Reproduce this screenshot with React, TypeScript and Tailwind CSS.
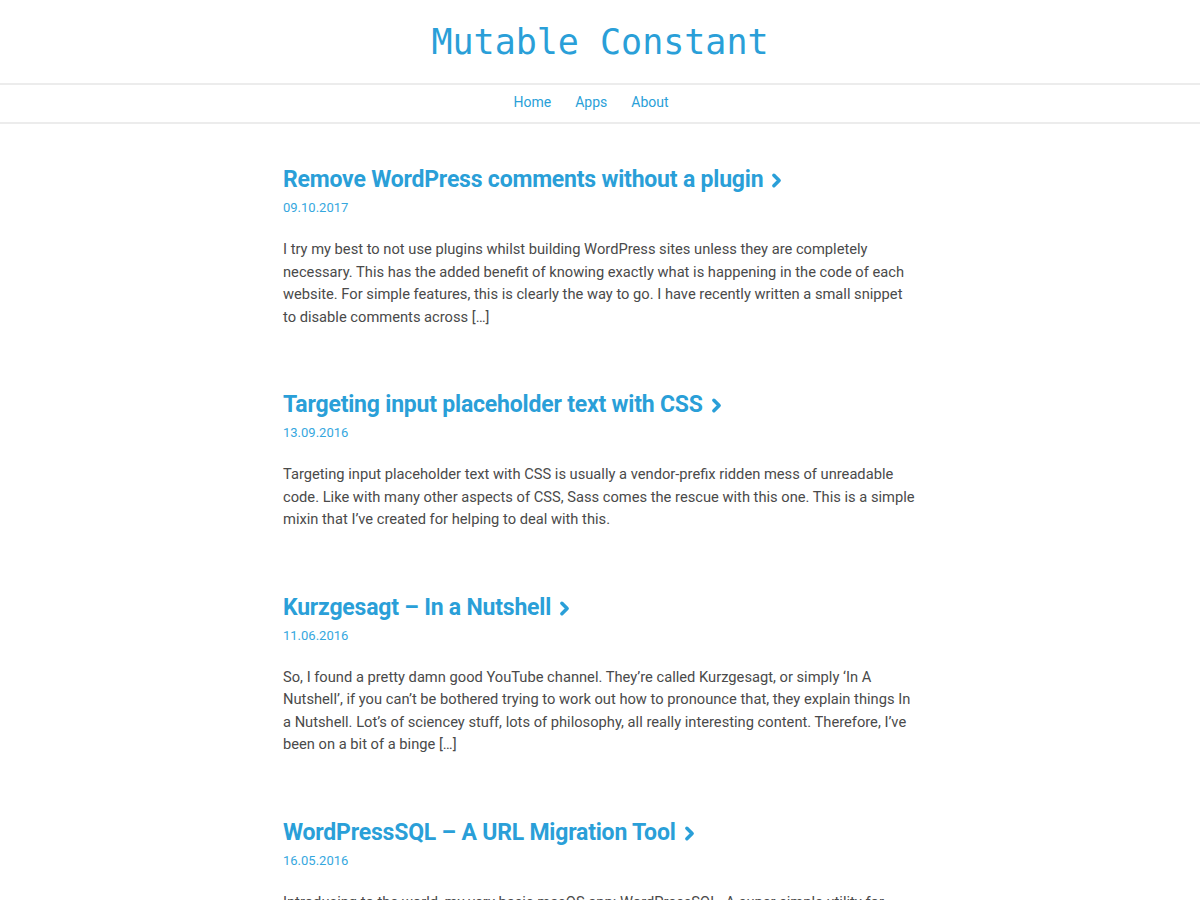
import React from 'react';
import { ChevronRight } from 'lucide-react';

const POSTS = [
  {
    title: 'Remove WordPress comments without a plugin',
    date: '09.10.2017',
    lines: [
      'I try my best to not use plugins whilst building WordPress sites unless they are completely',
      'necessary. This has the added benefit of knowing exactly what is happening in the code of each',
      'website. For simple features, this is clearly the way to go. I have recently written a small snippet',
      'to disable comments across […]',
    ],
  },
  {
    title: 'Targeting input placeholder text with CSS',
    date: '13.09.2016',
    lines: [
      'Targeting input placeholder text with CSS is usually a vendor-prefix ridden mess of unreadable',
      'code. Like with many other aspects of CSS, Sass comes the rescue with this one. This is a simple',
      'mixin that I’ve created for helping to deal with this.',
    ],
  },
  {
    title: 'Kurzgesagt – In a Nutshell',
    date: '11.06.2016',
    lines: [
      'So, I found a pretty damn good YouTube channel. They’re called Kurzgesagt, or simply ‘In A',
      'Nutshell’, if you can’t be bothered trying to work out how to pronounce that, they explain things In',
      'a Nutshell. Lot’s of sciencey stuff, lots of philosophy, all really interesting content. Therefore, I’ve',
      'been on a bit of a binge […]',
    ],
  },
  {
    title: 'WordPressSQL – A URL Migration Tool',
    date: '16.05.2016',
    lines: [
      'Introducing to the world, my very basic macOS app: WordPressSQL. A super simple utility for',
      'changing URLs in a WordPress database export.',
    ],
  },
];

export default function App() {
  return (
    <div className="min-h-screen bg-white font-['Roboto','Liberation_Sans',sans-serif]">
      <header className="h-[85px] flex items-center justify-center border-b-2 border-[#ececec]">
        <h1 className="font-['DejaVu_Sans_Mono',monospace] text-[35px] leading-none text-[#2a9fd8] pt-[1px]">
          Mutable Constant
        </h1>
      </header>

      <nav className="h-[39px] flex items-center justify-center gap-6 border-b-2 border-[#ececec] text-[14px] text-[#2a9fd8] pb-[2px] pr-[18px]">
        <a href="#">Home</a>
        <a href="#">Apps</a>
        <a href="#">About</a>
      </nav>

      <main className="w-[634px] mx-auto pt-[41px]">
        {POSTS.map((post) => (
          <article key={post.date} className="mb-[62px]">
            <h2 className="flex items-center text-[23px] leading-[30px] font-bold text-[#2a9fd8] tracking-[-0.2px]">
              {post.title}
              <ChevronRight size={21} strokeWidth={4} className="ml-[3px] mt-[1px]" />
            </h2>
            <div className="mt-[3px] text-[13px] leading-5 text-[#35a7de]">{post.date}</div>
            <p className="mt-5 text-[14.7px] leading-[22.5px] text-[#4a4a4a] whitespace-nowrap">
              {post.lines.map((line, i) => (
                <span key={i} className="block">
                  {line}
                </span>
              ))}
            </p>
          </article>
        ))}
      </main>
    </div>
  );
}
